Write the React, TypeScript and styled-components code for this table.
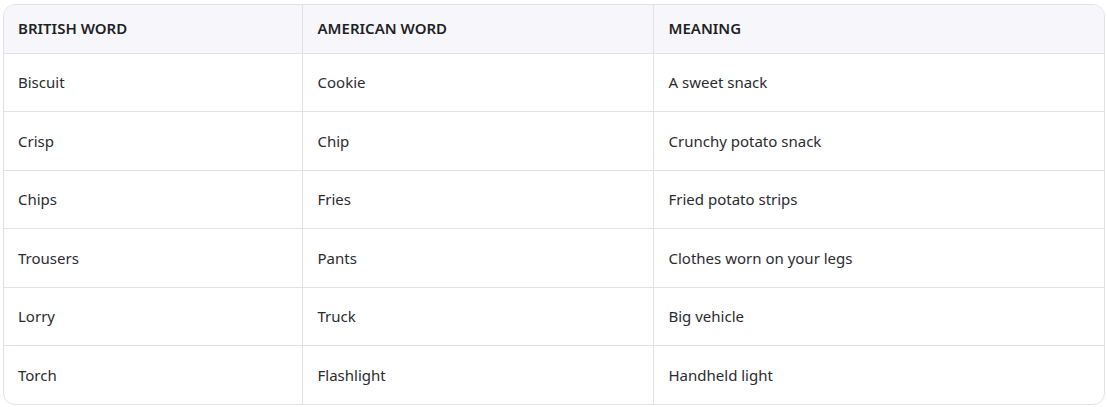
import React from "react";
import styled, { createGlobalStyle } from "styled-components";

const Global = createGlobalStyle`
  html, body { margin: 0; padding: 0; background: #ffffff; }
  body { font-family: "Noto Sans", "Open Sans", sans-serif; }
`;

const Page = styled.div`
  padding: 4px 3px 0 3px;
`;

const Frame = styled.div`
  width: 1102px;
  border: 1px solid #e1e1ea;
  border-radius: 12px;
  overflow: hidden;
  box-sizing: border-box;
`;

const Table = styled.table`
  width: 100%;
  border-collapse: collapse;
  table-layout: fixed;
  font-size: 15px;
`;

const HeadCell = styled.th<{ $w: number }>`
  width: ${(p) => p.$w}px;
  height: 48px;
  padding: 0 14px 1px 15px;
  text-align: left;
  font-weight: 600;
  color: #1f1f24;
  background: #f7f7fb;
  border-bottom: 1px solid #e1e1ea;
  border-left: 1px solid #e1e1ea;
  &:first-child { border-left: none; padding-left: 14px; }
  box-sizing: border-box;
`;

const Row = styled.tr<{ $last: boolean }>`
  & > td { border-bottom: ${(p) => (p.$last ? "none" : "1px solid #e1e1ea")}; }
`;

const Cell = styled.td`
  height: 58.5px;
  padding: 0 14px 0 15px;
  color: #2b2b30;
  border-left: 1px solid #e1e1ea;
  &:first-child { border-left: none; padding-left: 14px; }
  box-sizing: border-box;
`;

const rows = [
  ["Biscuit", "Cookie", "A sweet snack"],
  ["Crisp", "Chip", "Crunchy potato snack"],
  ["Chips", "Fries", "Fried potato strips"],
  ["Trousers", "Pants", "Clothes worn on your legs"],
  ["Lorry", "Truck", "Big vehicle"],
  ["Torch", "Flashlight", "Handheld light"],
];

export default function App() {
  return (
    <>
      <Global />
      <Page>
        <Frame>
          <Table>
            <thead>
              <tr>
                <HeadCell $w={298}>BRITISH WORD</HeadCell>
                <HeadCell $w={351}>AMERICAN WORD</HeadCell>
                <HeadCell $w={451}>MEANING</HeadCell>
              </tr>
            </thead>
            <tbody>
              {rows.map((r, i) => (
                <Row key={i} $last={i === rows.length - 1}>
                  {r.map((c, j) => (
                    <Cell key={j}>{c}</Cell>
                  ))}
                </Row>
              ))}
            </tbody>
          </Table>
        </Frame>
      </Page>
    </>
  );
}
